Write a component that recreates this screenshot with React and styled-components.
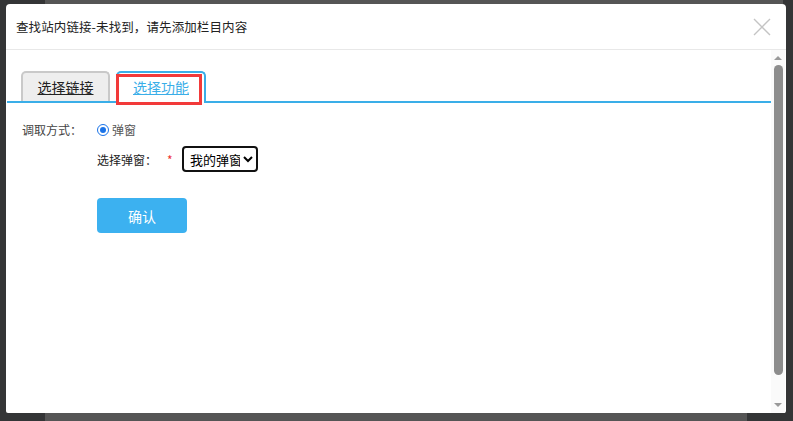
import React from "react";
import styled, { createGlobalStyle } from "styled-components";

const GlobalStyle = createGlobalStyle`
  html, body {
    margin: 0;
    padding: 0;
    width: 793px;
    height: 421px;
    overflow: hidden;
  }
  body {
    font-family: "Noto Sans CJK SC", "Noto Sans", sans-serif;
    color: #333;
  }
`;

const Backdrop = styled.div`
  position: relative;
  width: 793px;
  height: 421px;
  background:
    linear-gradient(#555, #555) 45px 0 / 738px 4px no-repeat,
    linear-gradient(#555, #555) 45px 413px / 702px 8px no-repeat,
    #343536;
`;

const Dialog = styled.div`
  position: absolute;
  left: 6px;
  top: 4px;
  width: 780px;
  height: 409px;
  background: #fff;
  border-radius: 4px 4px 2px 2px;
  display: flex;
  flex-direction: column;
  overflow: hidden;
`;

const Header = styled.div`
  height: 45px;
  flex-shrink: 0;
  border-bottom: 1px solid #e8e8e8;
  display: flex;
  align-items: center;
  justify-content: space-between;
  padding: 0 14px 0 10px;
`;

const Title = styled.div`
  font-size: 12.5px;
  color: #222;
  letter-spacing: 0.1px;
`;

const CloseButton = styled.button`
  border: none;
  background: none;
  padding: 0;
  width: 20px;
  height: 20px;
  cursor: pointer;
  display: flex;
`;

const Body = styled.div`
  flex: 1;
  display: flex;
  min-height: 0;
`;

const Content = styled.div`
  flex: 1;
  padding: 21px 0 0 1px;
`;

const TabBar = styled.div`
  display: flex;
  align-items: flex-end;
  gap: 6px;
  padding-left: 14px;
  height: 30px;
  border-bottom: 2px solid #3aaee8;
`;

const Tab = styled.div`
  position: relative;
  width: ${({ $w }) => $w}px;
  box-sizing: border-box;
  border: ${({ $active }) => ($active ? "2px solid #3aaee8" : "2px solid #c9c9c9")};
  border-bottom: none;
  border-radius: 5px 5px 0 0;
  background: ${({ $active }) => ($active ? "#fff" : "#eeeeee")};
  margin-bottom: ${({ $active }) => ($active ? "-2px" : "0")};
  height: ${({ $active }) => ($active ? "32px" : "30px")};
  display: flex;
  align-items: flex-start;
  justify-content: center;
  padding-top: 4px;
  font-size: 14px;
  text-decoration: underline;
  color: ${({ $active }) => ($active ? "#3aaee8" : "#222")};
`;

const Highlight = styled.div`
  position: absolute;
  left: -2px;
  top: 1px;
  width: 86px;
  height: 31px;
  box-sizing: border-box;
  border: 3px solid #f23a3a;
`;

const Form = styled.div`
  padding: 18px 0 0 15px;
  display: flex;
  flex-direction: column;
`;

const Row = styled.div`
  display: flex;
  align-items: center;
  min-height: ${({ $h }) => $h || 16}px;
  margin-bottom: ${({ $mb }) => $mb || 0}px;
  padding-left: ${({ $indent }) => ($indent ? 75 : 0)}px;
  font-size: 12px;
`;

const Label = styled.div`
  width: 75px;
  color: #444;
`;

const RadioLabel = styled.label`
  display: flex;
  align-items: center;
  gap: 3px;
  color: #555;
`;

const Radio = styled.span`
  width: 12px;
  height: 12px;
  box-sizing: border-box;
  border-radius: 50%;
  border: 1.5px solid #1a73e8;
  display: flex;
  align-items: center;
  justify-content: center;
  &::after {
    content: "";
    width: 6px;
    height: 6px;
    border-radius: 50%;
    background: #1a73e8;
  }
`;

const FieldLabel = styled.div`
  width: 70px;
  color: #222;
`;

const Required = styled.span`
  color: #e33;
  width: 15px;
`;

const Select = styled.select`
  width: 76px;
  height: 26px;
  border: 2px solid #111;
  border-radius: 4px;
  font-family: "Noto Sans CJK SC", sans-serif;
  font-size: 13px;
  color: #000;
  background: #fff;
  padding: 0 0 0 2px;
`;

const Confirm = styled.button`
  margin-left: 75px;
  width: 90px;
  height: 35px;
  border: none;
  border-radius: 4px;
  background: #3cb1f0;
  color: #fff;
  font-family: "Noto Sans CJK SC", sans-serif;
  font-size: 14px;
  cursor: pointer;
`;

const ScrollBar = styled.div`
  width: 14px;
  margin-right: 1px;
  background: #fafafa;
  display: flex;
  flex-direction: column;
  align-items: center;
  padding: 6px 0 6px;
`;

const Arrow = styled.div`
  width: 0;
  height: 0;
  border-left: 4px solid transparent;
  border-right: 4px solid transparent;
  ${({ $down }) =>
    $down ? "border-top: 4px solid #999;" : "border-bottom: 4px solid #999;"}
`;

const Thumb = styled.div`
  width: 9px;
  height: 310px;
  margin: 5px 0 auto;
  border-radius: 5px;
  background: #8c8c8c;
`;

const App = () => (
  <>
    <GlobalStyle />
    <Backdrop>
      <Dialog>
        <Header>
          <Title>查找站内链接-未找到，请先添加栏目内容</Title>
          <CloseButton aria-label="关闭">
            <svg width="20" height="20" viewBox="0 0 20 20">
              <path d="M2 2 L18 18 M18 2 L2 18" stroke="#c4c4c4" strokeWidth="1.4" />
            </svg>
          </CloseButton>
        </Header>
        <Body>
          <Content>
            <TabBar>
              <Tab $w={89}>选择链接</Tab>
              <Tab $w={90} $active>
                选择功能
                <Highlight />
              </Tab>
            </TabBar>
            <Form>
              <Row $h={16} $mb={8}>
                <Label>调取方式：</Label>
                <RadioLabel>
                  <Radio />
                  弹窗
                </RadioLabel>
              </Row>
              <Row $indent $h={26} $mb={26}>
                <FieldLabel>选择弹窗：</FieldLabel>
                <Required>*</Required>
                <Select defaultValue="1">
                  <option value="1">我的弹窗</option>
                </Select>
              </Row>
              <Confirm>确认</Confirm>
            </Form>
          </Content>
          <ScrollBar>
            <Arrow />
            <Thumb />
            <Arrow $down />
          </ScrollBar>
        </Body>
      </Dialog>
    </Backdrop>
  </>
);

export default App;
